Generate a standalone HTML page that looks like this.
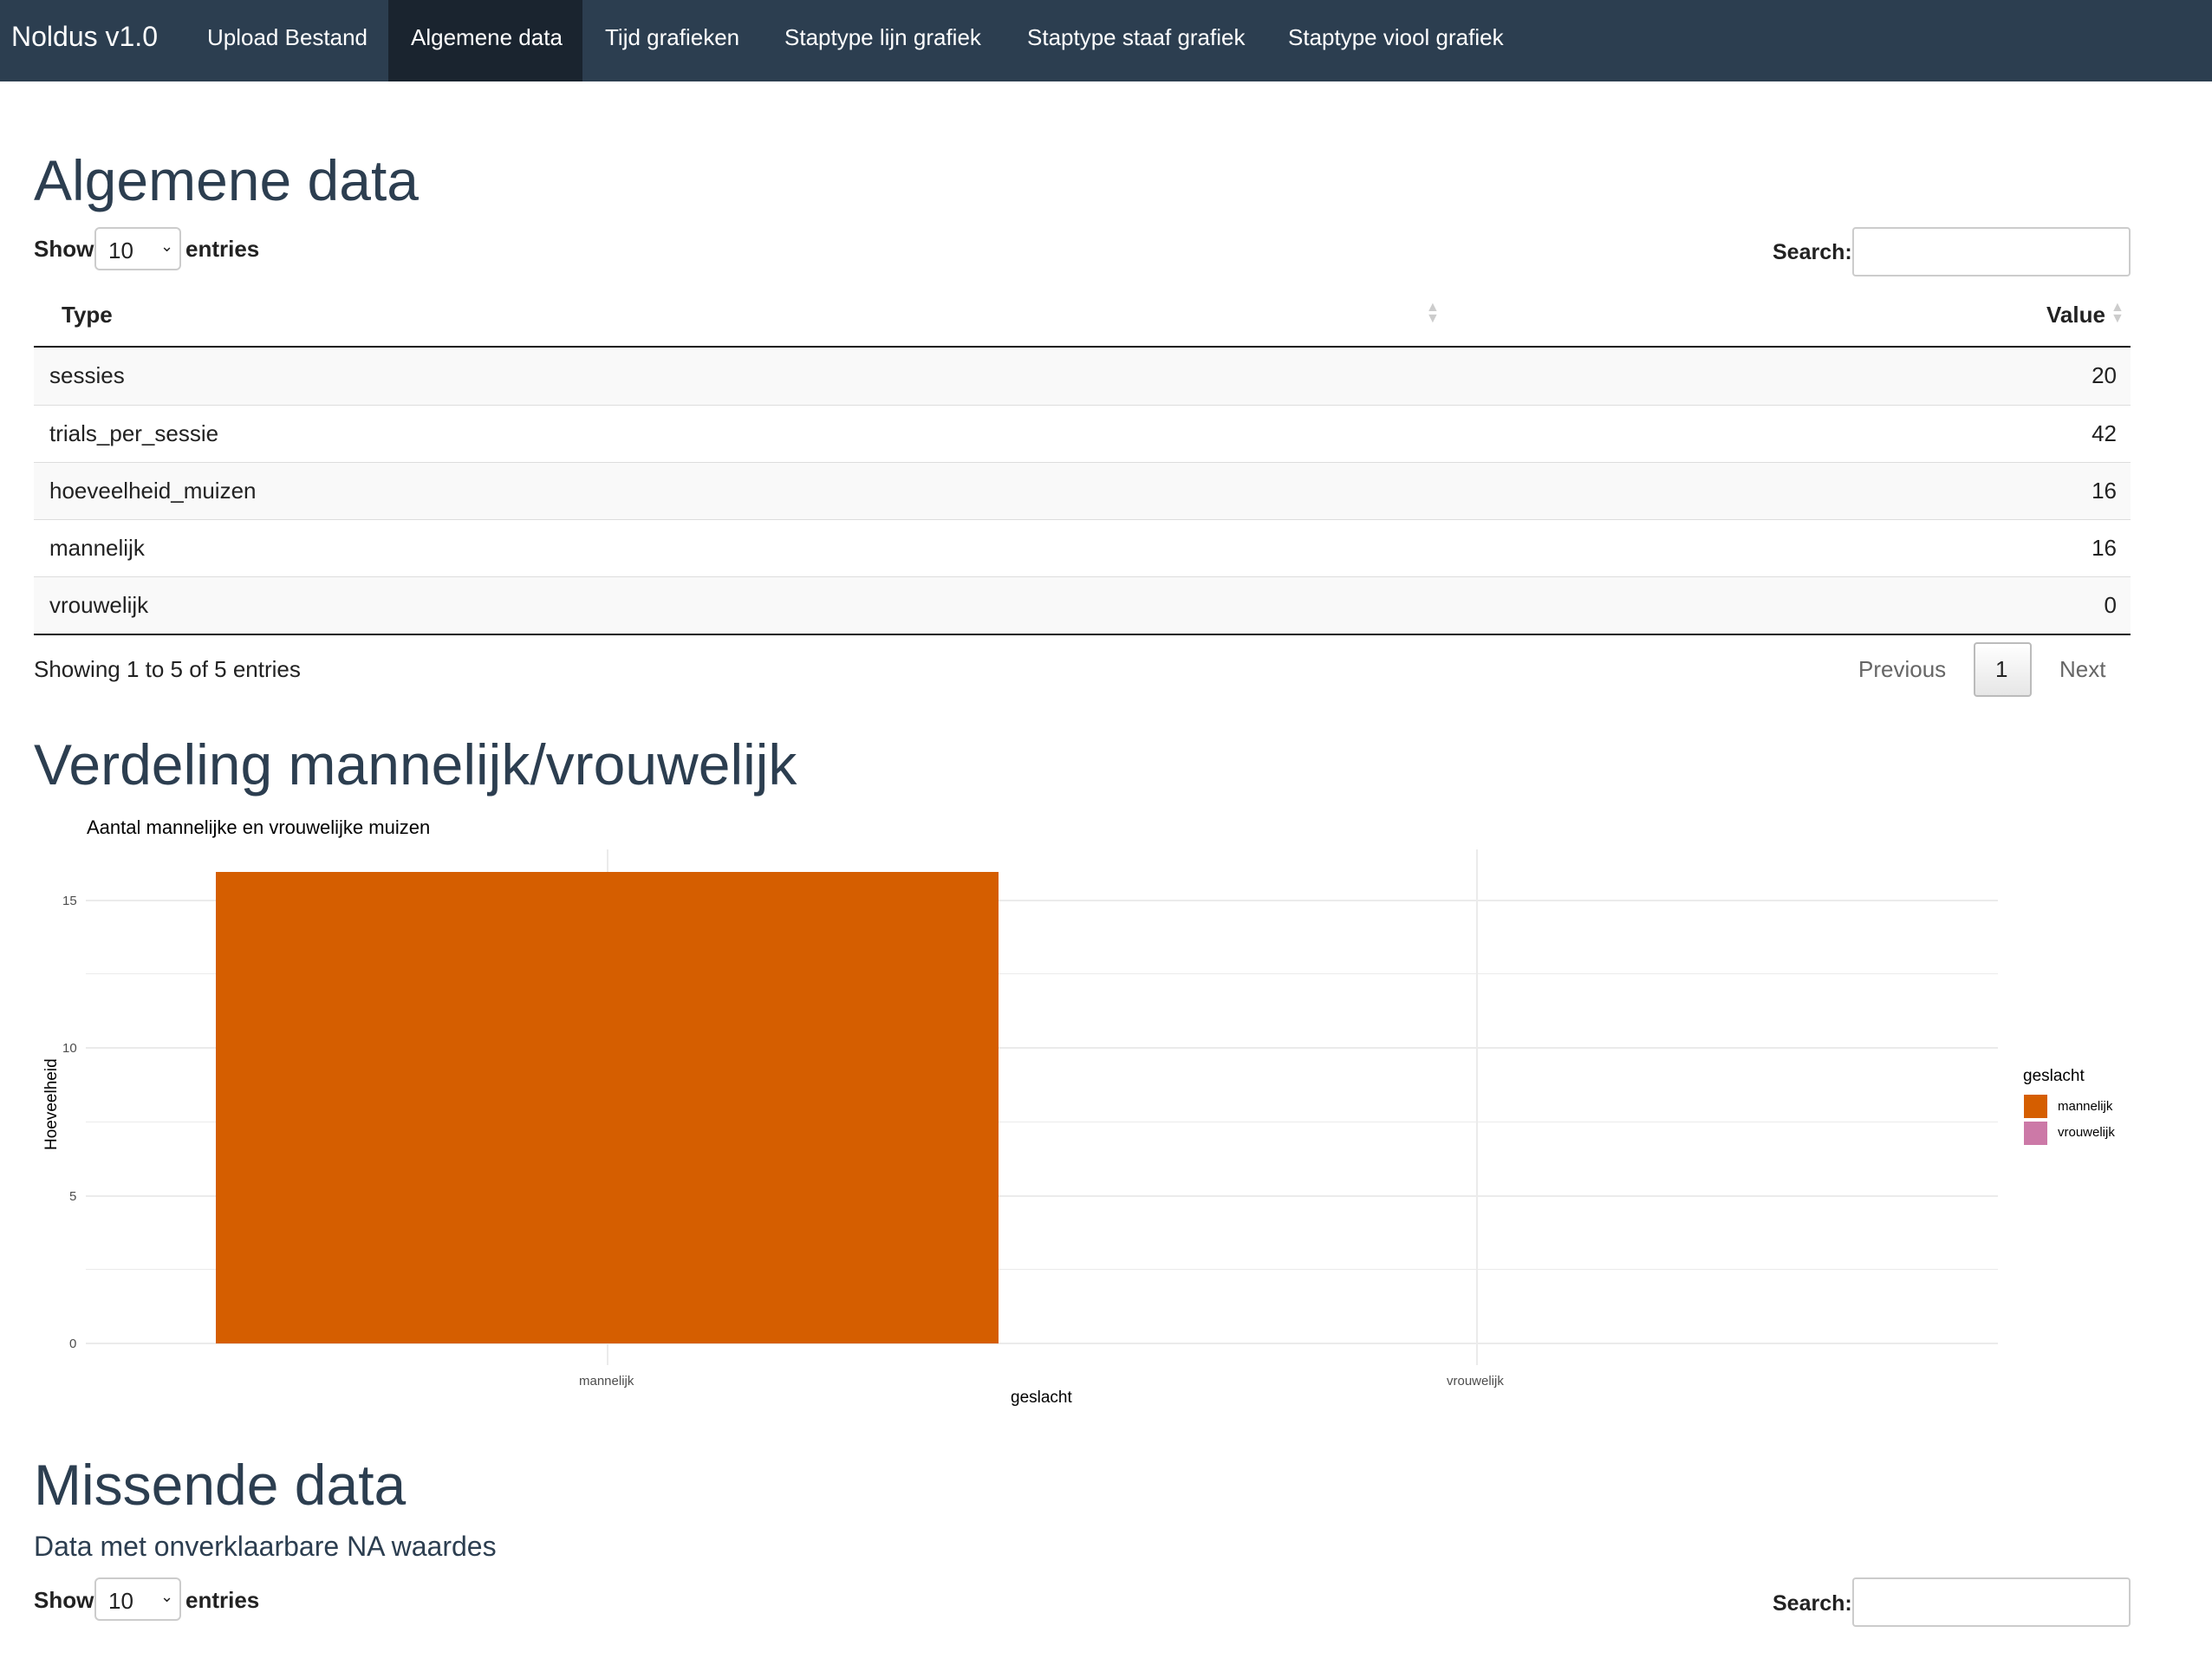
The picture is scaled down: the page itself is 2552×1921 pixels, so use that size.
<!DOCTYPE html>
<html><head><meta charset="utf-8"><style>
*{margin:0;padding:0;box-sizing:border-box}
body{width:2552px;height:1921px;background:#fff;font-family:"Liberation Sans",sans-serif;color:#222;position:relative;overflow:hidden}
.a{position:absolute;white-space:nowrap}
.nav{position:absolute;left:0;top:0;width:2552px;height:94px;background:#2c3e50}
.nav .a{color:#fff;font-size:26px;top:28px}
.h1{font-size:66px;color:#2c3e50;line-height:1}
.t{font-size:26px}
.b{font-weight:bold}
.sel{position:absolute;border:2px solid #ccc;border-radius:6px;width:100px;height:50px;background:#fff}
.inp{position:absolute;border:2px solid #ccc;border-radius:4px;background:#fff}
.row{position:absolute;left:39px;width:2419px;height:66px;border-top:1px solid #ddd}
.gl{position:absolute;background:#ebebeb}
.sm{font-size:15px;color:#4d4d4d}
</style></head><body>
<div class="nav">
<div class="a" style="left:13px;top:24px;font-size:32px">Noldus v1.0</div>
<div style="position:absolute;left:448px;top:0;width:224px;height:94px;background:#1a242f"></div>
<div class="a" style="left:239px">Upload Bestand</div>
<div class="a" style="left:474px">Algemene data</div>
<div class="a" style="left:698px">Tijd grafieken</div>
<div class="a" style="left:905px">Staptype lijn grafiek</div>
<div class="a" style="left:1185px">Staptype staaf grafiek</div>
<div class="a" style="left:1486px">Staptype viool grafiek</div>
</div>

<div class="a h1" style="left:39px;top:175px">Algemene data</div>
<div class="a t b" style="left:39px;top:272px">Show</div>
<div class="sel" style="left:109px;top:262px"><span class="a t" style="left:14px;top:10px">10</span><span class="a" style="left:74px;top:10px;font-size:18px">⌄</span></div>
<div class="a t b" style="left:214px;top:272px">entries</div>
<div class="a b" style="left:2045px;top:277px;font-size:25px">Search:</div>
<div class="inp" style="left:2137px;top:262px;width:321px;height:57px"></div>

<div class="a t b" style="left:71px;top:348px">Type</div>
<div class="a" style="left:1645px;top:348px;color:#ccc;font-size:16px;line-height:13px">▲<br>▼</div>
<div class="a t b" style="left:2361px;top:348px">Value</div>
<div class="a" style="left:2435px;top:348px;color:#ccc;font-size:16px;line-height:13px">▲<br>▼</div>
<div style="position:absolute;left:39px;top:399px;width:2419px;height:2px;background:#111"></div>
<div class="row" style="top:401px;background:#f9f9f9;border-top:none"><span class="a t" style="left:18px;top:17px">sessies</span><span class="a t" style="right:16px;top:17px">20</span></div>
<div class="row" style="top:467px"><span class="a t" style="left:18px;top:17px">trials_per_sessie</span><span class="a t" style="right:16px;top:17px">42</span></div>
<div class="row" style="top:533px;background:#f9f9f9"><span class="a t" style="left:18px;top:17px">hoeveelheid_muizen</span><span class="a t" style="right:16px;top:17px">16</span></div>
<div class="row" style="top:599px"><span class="a t" style="left:18px;top:17px">mannelijk</span><span class="a t" style="right:16px;top:17px">16</span></div>
<div class="row" style="top:665px;background:#f9f9f9"><span class="a t" style="left:18px;top:17px">vrouwelijk</span><span class="a t" style="right:16px;top:17px">0</span></div>
<div style="position:absolute;left:39px;top:731px;width:2419px;height:2px;background:#111"></div>

<div class="a t" style="left:39px;top:757px">Showing 1 to 5 of 5 entries</div>
<div class="a t" style="left:2144px;top:757px;color:#666">Previous</div>
<div style="position:absolute;left:2277px;top:741px;width:67px;height:63px;border:2px solid #bbb;border-radius:4px;background:linear-gradient(#fff,#e6e6e6)"></div>
<div class="a t" style="left:2302px;top:757px">1</div>
<div class="a t" style="left:2376px;top:757px;color:#666">Next</div>

<div class="a h1" style="left:39px;top:849px">Verdeling mannelijk/vrouwelijk</div>
<div class="a" style="left:100px;top:942px;font-size:22px;color:#000">Aantal mannelijke en vrouwelijke muizen</div>

<div class="gl" style="left:99px;top:1123px;width:2206px;height:1px"></div>
<div class="gl" style="left:99px;top:1294px;width:2206px;height:1px"></div>
<div class="gl" style="left:99px;top:1464px;width:2206px;height:1px"></div>
<div class="gl" style="left:99px;top:1038px;width:2206px;height:2px"></div>
<div class="gl" style="left:99px;top:1208px;width:2206px;height:2px"></div>
<div class="gl" style="left:99px;top:1379px;width:2206px;height:2px"></div>
<div class="gl" style="left:99px;top:1549px;width:2206px;height:2px"></div>
<div class="gl" style="left:700px;top:980px;width:2px;height:595px"></div>
<div class="gl" style="left:1703px;top:980px;width:2px;height:595px"></div>
<div style="position:absolute;left:249px;top:1006px;width:903px;height:544px;background:#d55e00"></div>
<div class="a sm" style="left:72px;top:1031px">15</div>
<div class="a sm" style="left:72px;top:1201px">10</div>
<div class="a sm" style="left:80px;top:1372px">5</div>
<div class="a sm" style="left:80px;top:1542px">0</div>
<div class="a sm" style="left:668px;top:1585px">mannelijk</div>
<div class="a sm" style="left:1669px;top:1585px">vrouwelijk</div>
<div class="a" style="left:1166px;top:1602px;font-size:19px;color:#000">geslacht</div>
<div class="a" style="left:10px;top:1266px;font-size:19px;color:#000;transform:rotate(-90deg);transform-origin:center;width:100px;text-align:center">Hoeveelheid</div>
<div class="a" style="left:2334px;top:1231px;font-size:19px;color:#000">geslacht</div>
<div style="position:absolute;left:2335px;top:1263px;width:27px;height:27px;background:#d55e00"></div>
<div style="position:absolute;left:2335px;top:1294px;width:27px;height:27px;background:#cc79a7"></div>
<div class="a" style="left:2374px;top:1268px;font-size:15px;color:#000">mannelijk</div>
<div class="a" style="left:2374px;top:1298px;font-size:15px;color:#000">vrouwelijk</div>

<div class="a h1" style="left:39px;top:1680px">Missende data</div>
<div class="a" style="left:39px;top:1766px;font-size:32px;color:#2c3e50">Data met onverklaarbare NA waardes</div>
<div class="a t b" style="left:39px;top:1831px">Show</div>
<div class="sel" style="left:109px;top:1820px"><span class="a t" style="left:14px;top:10px">10</span><span class="a" style="left:74px;top:10px;font-size:18px">⌄</span></div>
<div class="a t b" style="left:214px;top:1831px">entries</div>
<div class="a b" style="left:2045px;top:1836px;font-size:25px">Search:</div>
<div class="inp" style="left:2137px;top:1820px;width:321px;height:57px"></div>
</body></html>
